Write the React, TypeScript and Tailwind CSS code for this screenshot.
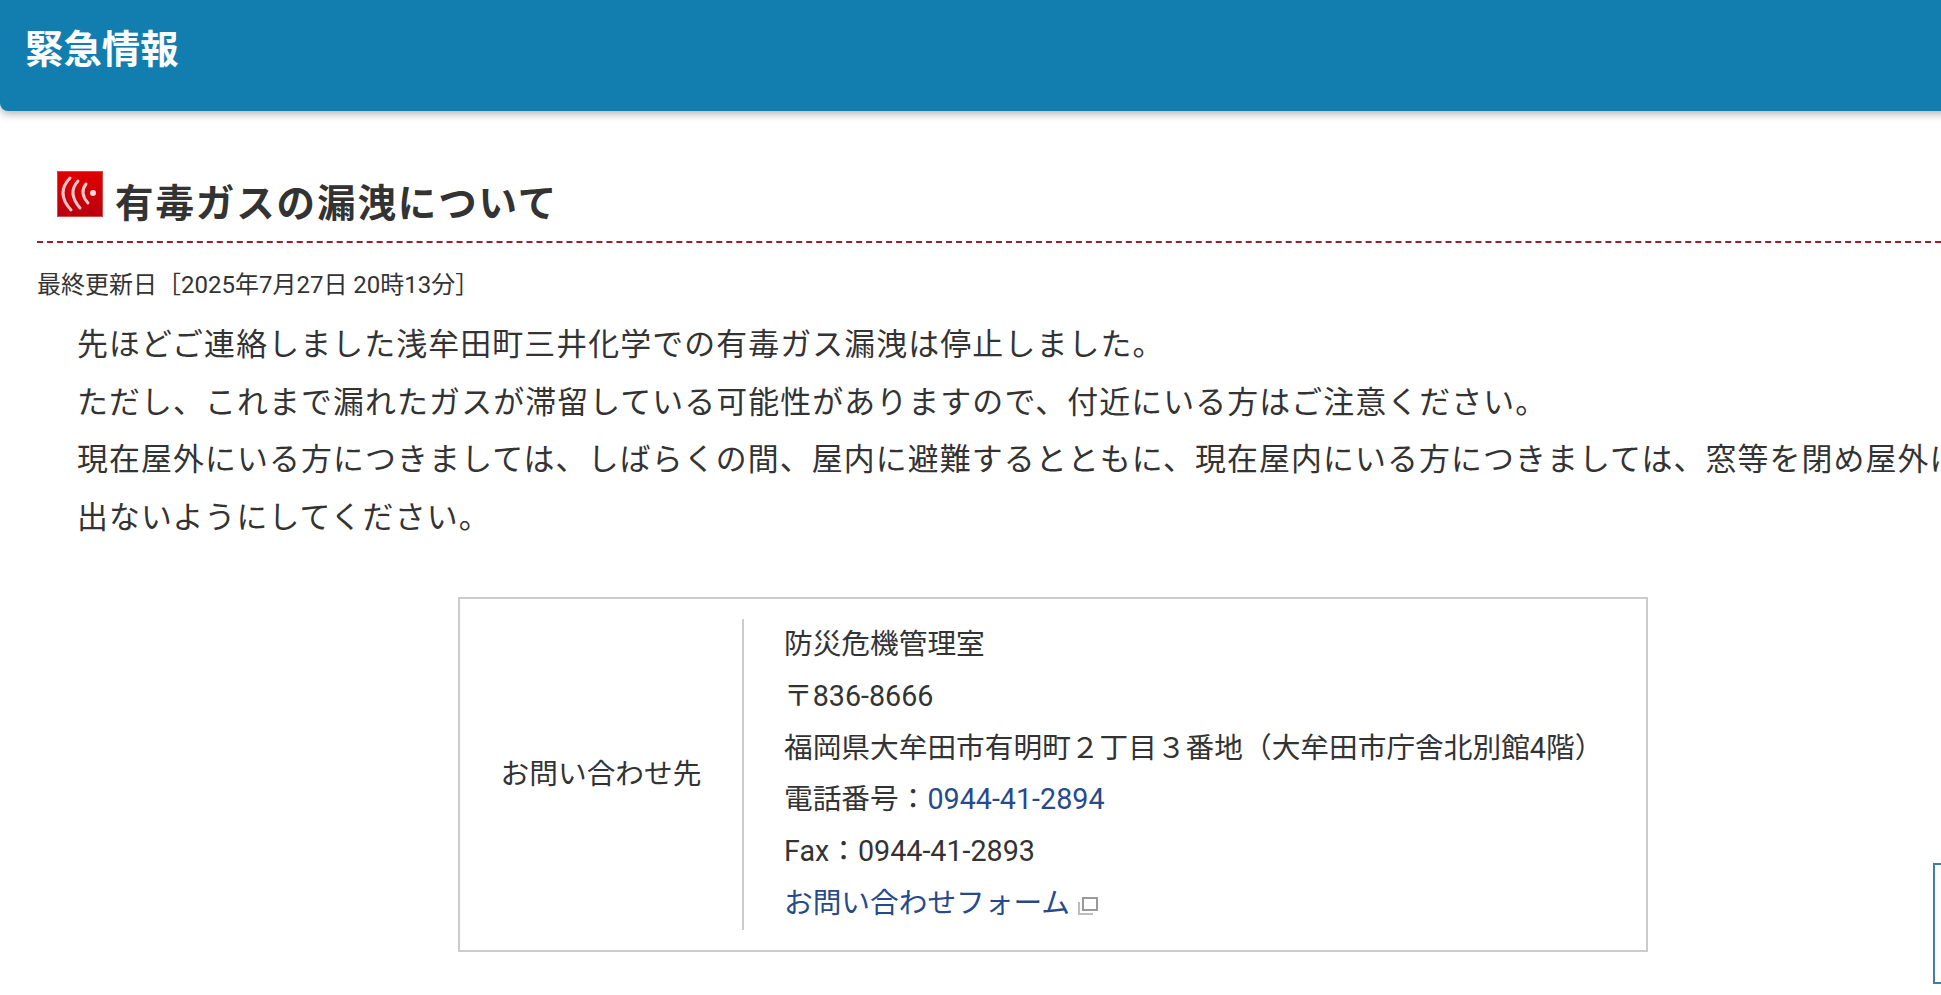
const jp = "font-['Roboto','Noto_Sans_CJK_JP',sans-serif]";

function AlertIcon() {
  return (
    <svg viewBox="0 0 46 46" className="w-[46px] h-[46px] shrink-0">
      <defs>
        <linearGradient id="g" x1="0" y1="0" x2="0" y2="1">
          <stop offset="0" stopColor="#e00000" />
          <stop offset="1" stopColor="#b80010" />
        </linearGradient>
      </defs>
      <rect x="0.5" y="0.5" width="45" height="45" fill="url(#g)" stroke="#d24a4a" />
      <circle cx="36" cy="22" r="3" fill="#ffd8d8" />
      <g fill="none" stroke="#ffc4c4" strokeWidth="3" strokeLinecap="round">
        <path d="M29 13 Q22 22 31 32" />
        <path d="M21 10 Q10 22 23 37" />
        <path d="M13 7 Q-1.5 22 14 39" />
      </g>
    </svg>
  );
}

function ExternalIcon() {
  return (
    <svg viewBox="0 0 20 18" className="inline-block w-[20px] h-[18px] ml-[8px] align-[-2px]">
      <rect x="5" y="1" width="14" height="12" fill="none" stroke="#9a9a9a" strokeWidth="2" />
      <path d="M1 5 V17 H15" fill="none" stroke="#bdbdbd" strokeWidth="2" />
    </svg>
  );
}

export default function App() {
  return (
    <div className={`${jp} relative w-[1941px] h-[995px] overflow-hidden bg-white text-[#333]`}>
      <header className="w-[1960px] h-[111px] bg-[#127eb0] rounded-b-[8px] shadow-[0_3px_8px_rgba(0,0,0,0.3)] pl-[25px] pt-[23px]">
        <h1 className="text-[38.4px] leading-[54px] font-bold text-white">緊急情報</h1>
      </header>

      <main className="pl-[37px] pt-[60px]">
        <h2 className="flex items-start pl-[20px] h-[72px] border-b-2 border-dashed border-[#a11a2e]">
          <AlertIcon />
          <span className="ml-[12px] mt-[7px] text-[38.5px] leading-[52px] font-bold tracking-[1.9px]">有毒ガスの漏洩について</span>
        </h2>

        <p className="mt-[25px] text-[24px] leading-[34px]">最終更新日［2025年7月27日 20時13分］</p>

        <div className="mt-[14px] pl-[40px] text-[30.9px] leading-[57.5px] tracking-[1.12px] whitespace-nowrap">
          <p>先ほどご連絡しました浅牟田町三井化学での有毒ガス漏洩は停止しました。</p>
          <p>ただし、これまで漏れたガスが滞留している可能性がありますので、付近にいる方はご注意ください。</p>
          <p>現在屋外にいる方につきましては、しばらくの間、屋内に避難するとともに、現在屋内にいる方につきましては、窓等を閉め屋外に</p>
          <p>出ないようにしてください。</p>
        </div>

        <section className="mt-[51px] ml-[421px] w-[1190px] h-[355px] border-2 border-[#ccc] flex py-[20px] text-[28.7px] leading-[51.8px]">
          <div className="w-[284px] border-r-2 border-[#ccc] flex items-center justify-center">
            お問い合わせ先
          </div>
          <div className="pl-[40px] whitespace-nowrap">
            <p>防災危機管理室</p>
            <p>〒836-8666</p>
            <p>福岡県大牟田市有明町２丁目３番地（大牟田市庁舎北別館4階）</p>
            <p>電話番号：<span className="text-[#264a8a]">0944-41-2894</span></p>
            <p>Fax：0944-41-2893</p>
            <p className="text-[#264a8a]">お問い合わせフォーム<ExternalIcon /></p>
          </div>
        </section>
      </main>

      <div className="absolute left-[1933px] top-[863px] w-[60px] h-[121px] border-2 border-[#3f7fa3] bg-white" />
    </div>
  );
}
